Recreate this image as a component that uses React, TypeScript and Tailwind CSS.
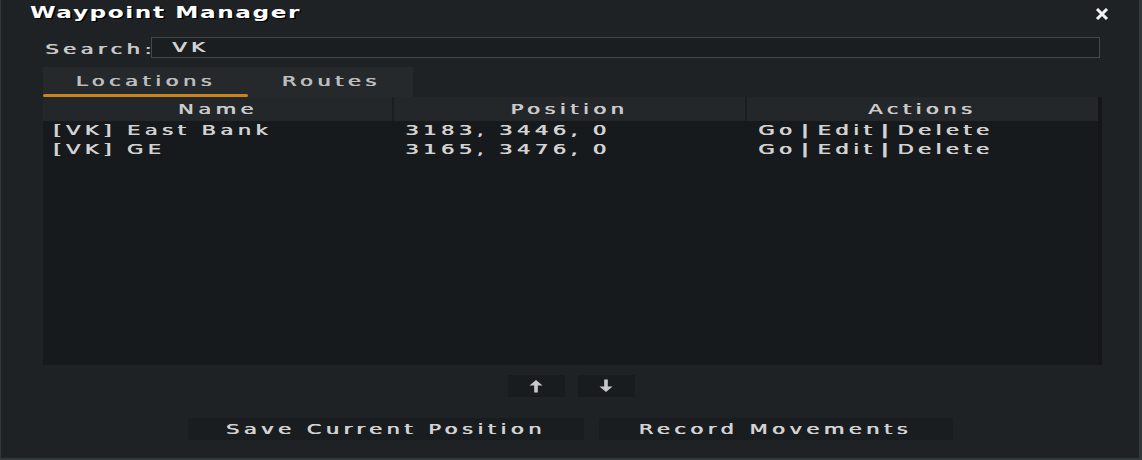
import React from "react";

const px = "font-['DejaVu_Sans',sans-serif] text-[14px] tracking-[3px] inline-block scale-x-[1.5] whitespace-nowrap [text-shadow:0.6px_0_0_currentColor]";

const Wide: React.FC<{ children: React.ReactNode; center?: boolean; className?: string }> = ({ children, center, className = "" }) => (
  <span className={`${px} ${center ? "origin-center" : "origin-left"} ${className}`}>{children}</span>
);

const rows = [
  { name: "[VK] East Bank", pos: "3183, 3446, 0" },
  { name: "[VK] GE", pos: "3165, 3476, 0" },
];

const Arrow: React.FC<{ down?: boolean }> = ({ down }) => (
  <svg width="14" height="16" viewBox="0 0 14 16" className={down ? "rotate-180" : ""}>
    <path d="M7 2 L13.5 7.5 L0.5 7.5 Z" fill="#c9c9c9" />
    <rect x="5.2" y="6" width="3.6" height="8.5" fill="#c9c9c9" />
  </svg>
);

const Bar = () => <span className="ml-[3px] mr-[6px] font-bold tracking-[0px]">|</span>;

export default function App() {
  return (
    <div className="w-[1142px] h-[460px] bg-[#1e2224] border-l border-r-[3px] border-b-[2px] border-[#33383a] flex flex-col text-[#cfcfcf] overflow-hidden">
      {/* title */}
      <div className="h-[27px] flex items-center justify-between pl-[29px] pr-[30px] shrink-0">
        <span className="font-['DejaVu_Sans',sans-serif] font-bold text-[15px] tracking-[1px] inline-block scale-x-[1.55] origin-left text-white [text-shadow:1px_1px_0_#000]">
          Waypoint Manager
        </span>
        <svg width="14" height="12" viewBox="0 0 14 12">
          <path d="M2 1 L12 11 M12 1 L2 11" stroke="#f2f2f2" strokeWidth="3" />
        </svg>
      </div>

      {/* search */}
      <div className="flex items-center pl-[44px] pr-[39px] mt-[10px] h-[21px] shrink-0">
        <div className="w-[106px] text-[#c8c8c8]">
          <Wide>Search:</Wide>
        </div>
        <div className="flex-1 h-[21px] bg-[#1b1e20] border border-[#42474a] flex items-center pl-[20px]">
          <Wide className="text-[#d2d2d2]">VK</Wide>
        </div>
      </div>

      {/* tabs */}
      <div className="ml-[42px] mt-[9px] w-[370px] h-[30px] bg-[#25292b] flex shrink-0">
        <div className="w-[205px] flex flex-col">
          <div className="flex-1 flex items-center justify-center pt-[2px] text-[#bdbdbd]">
            <Wide center>Locations</Wide>
          </div>
          <div className="h-[3px] bg-[#c6861b] rounded-full" />
        </div>
        <div className="flex-1 flex items-center justify-center pb-[1px] text-[#bdbdbd]">
          <Wide center>Routes</Wide>
        </div>
      </div>

      {/* table */}
      <div className="ml-[42px] w-[1059px] h-[268px] bg-[#171a1c] border-r-[4px] border-[#141618] shrink-0 flex flex-col">
        <div className="h-[24px] bg-[#23272a] flex text-[#cacaca] shrink-0">
          <div className="w-[351px] flex items-center justify-center border-r-[2px] border-[#1b1e20]">
            <Wide center>Name</Wide>
          </div>
          <div className="w-[353px] flex items-center justify-center border-r-[2px] border-[#1b1e20]">
            <Wide center>Position</Wide>
          </div>
          <div className="flex-1 flex items-center justify-center">
            <Wide center>Actions</Wide>
          </div>
        </div>
        <div className="-mt-[1.5px] flex flex-col">
          {rows.map((r) => (
            <div key={r.name} className="h-[19px] flex items-center text-[#d2d2d2]">
              <div className="w-[351px] pl-[10px]">
                <Wide>{r.name}</Wide>
              </div>
              <div className="w-[353px] pl-[11px]">
                <Wide>{r.pos}</Wide>
              </div>
              <div className="flex-1 pl-[11px]">
                <Wide>
                  Go<Bar />Edit<Bar />Delete
                </Wide>
              </div>
            </div>
          ))}
        </div>
      </div>

      {/* order buttons */}
      <div className="flex justify-center gap-[13px] mt-[10px] pl-[2px] shrink-0">
        <button className="w-[57px] h-[22px] bg-[#191c1e] flex items-center justify-center">
          <Arrow />
        </button>
        <button className="w-[57px] h-[22px] bg-[#191c1e] flex items-center justify-center">
          <Arrow down />
        </button>
      </div>

      {/* actions */}
      <div className="flex justify-center gap-[15px] mt-[21px] shrink-0">
        <button className="w-[396px] h-[22px] bg-[#1a1d1f] flex items-center justify-center text-[#d2d2d2]">
          <Wide center>Save Current Position</Wide>
        </button>
        <button className="w-[354px] h-[22px] bg-[#1a1d1f] flex items-center justify-center text-[#d2d2d2]">
          <Wide center>Record Movements</Wide>
        </button>
      </div>
    </div>
  );
}
